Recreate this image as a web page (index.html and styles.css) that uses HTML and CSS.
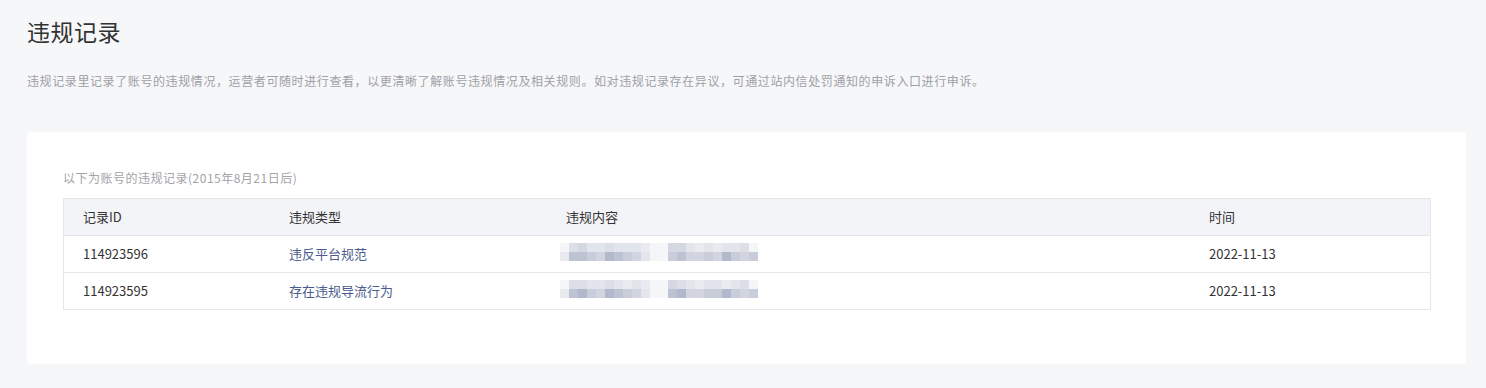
FILE: index.html
```html
<!DOCTYPE html>
<html lang="zh-CN">
<head>
<meta charset="utf-8">
<title>违规记录</title>
<link rel="stylesheet" href="styles.css">
</head>
<body>
<main class="page">
  <h1 class="title">违规记录</h1>
  <p class="desc">违规记录里记录了账号的违规情况，运营者可随时进行查看，以更清晰了解账号违规情况及相关规则。如对违规记录存在异议，可通过站内信处罚通知的申诉入口进行申诉。</p>
  <section class="card">
    <p class="sub">以下为账号的违规记录(2015年8月21日后)</p>
    <div class="table">
      <div class="row head">
        <div class="cell">记录ID</div>
        <div class="cell">违规类型</div>
        <div class="cell">违规内容</div>
        <div class="cell">时间</div>
      </div>
      <div class="row">
        <div class="cell">114923596</div>
        <div class="cell link">违反平台规范</div>
        <div class="cell">
          <div class="mosaic">
            <span class="a1"></span><span class="a4"></span><span class="a5"></span><span class="a3"></span><span class="a3"></span><span class="a4"></span><span class="a3"></span><span class="a3"></span><span class="a3"></span><span class="a2"></span><span class="a1"></span><span class="a1"></span><span class="a5"></span><span class="a5"></span><span class="a3"></span><span class="a2"></span><span class="a3"></span><span class="a2"></span><span class="a3"></span><span class="a3"></span><span class="a4"></span><span class="a1"></span>
            <span class="b1"></span><span class="b4"></span><span class="b4"></span><span class="b3"></span><span class="b2"></span><span class="b5"></span><span class="b4"></span><span class="b3"></span><span class="b2"></span><span class="a3"></span><span class="a1"></span><span class="a1"></span><span class="b3"></span><span class="b4"></span><span class="b2"></span><span class="b2"></span><span class="b3"></span><span class="b2"></span><span class="b5"></span><span class="b3"></span><span class="b2"></span><span class="b3"></span>
          </div>
        </div>
        <div class="cell">2022-11-13</div>
      </div>
      <div class="row">
        <div class="cell">114923595</div>
        <div class="cell link">存在违规导流行为</div>
        <div class="cell">
          <div class="mosaic">
            <span class="a1"></span><span class="a4"></span><span class="a4"></span><span class="a3"></span><span class="a3"></span><span class="a4"></span><span class="a3"></span><span class="a2"></span><span class="a3"></span><span class="a2"></span><span class="a1"></span><span class="a1"></span><span class="a5"></span><span class="a4"></span><span class="a3"></span><span class="a2"></span><span class="a3"></span><span class="a3"></span><span class="a2"></span><span class="a3"></span><span class="a4"></span><span class="a1"></span>
            <span class="b1"></span><span class="b4"></span><span class="b5"></span><span class="b3"></span><span class="b2"></span><span class="b5"></span><span class="b4"></span><span class="b3"></span><span class="b2"></span><span class="a3"></span><span class="a1"></span><span class="a1"></span><span class="b4"></span><span class="b5"></span><span class="b2"></span><span class="b2"></span><span class="b3"></span><span class="b3"></span><span class="b5"></span><span class="b3"></span><span class="b2"></span><span class="b3"></span>
          </div>
        </div>
        <div class="cell">2022-11-13</div>
      </div>
    </div>
  </section>
</main>
</body>
</html>
```

FILE: styles.css
```css
* { box-sizing: border-box; }

html, body {
  margin: 0;
  padding: 0;
  background: #f6f7f9;
  font-family: "Noto Sans CJK SC", "Noto Sans", "Liberation Sans", sans-serif;
  color: #333;
}

.page {
  padding: 15px 20px 24px 27px;
}

.title {
  margin: 0;
  font-size: 23px;
  font-weight: 400;
  line-height: 32px;
  letter-spacing: 0.5px;
  color: #333;
}

.desc {
  margin: 24px 0 0;
  font-size: 12px;
  line-height: 20px;
  letter-spacing: 0.6px;
  color: #9ea1a6;
}

.card {
  margin-top: 41px;
  background: #fff;
  border-radius: 4px;
  padding: 36px 35px 54px 36px;
}

.sub {
  margin: 0 0 10px;
  font-size: 12px;
  line-height: 20px;
  letter-spacing: 0.5px;
  color: #a2a4a8;
}

.table {
  border: 1px solid #e5e6ea;
  font-size: 13px;
}

.row {
  display: grid;
  grid-template-columns: 206px 277px 643px 1fr;
  height: 37px;
  border-bottom: 1px solid #e5e6ea;
  align-items: center;
}

.row:last-child {
  height: 36px;
  border-bottom: 0;
}

.row.head {
  background: #f3f4f7;
}

.cell {
  padding-left: 19px;
  line-height: 20px;
  color: #333;
  white-space: nowrap;
}

.cell.link {
  color: #4b5c8c;
}

.mosaic {
  margin-left: -6px;
  margin-top: -4px;
  display: grid;
  grid-template-columns: repeat(22, 9px);
  grid-auto-rows: 9px;
  width: 198px;
}

.mosaic span { display: block; }

.a1 { background: #f5f6f8; }
.a2 { background: #e9ebf0; }
.a3 { background: #e3e5ec; }
.a4 { background: #dcdfe8; }
.a5 { background: #d5d8e3; }
.b1 { background: #e9eaee; }
.b2 { background: #d2d5df; }
.b3 { background: #c9cdda; }
.b4 { background: #bec3d4; }
.b5 { background: #b3b9cc; }
```
